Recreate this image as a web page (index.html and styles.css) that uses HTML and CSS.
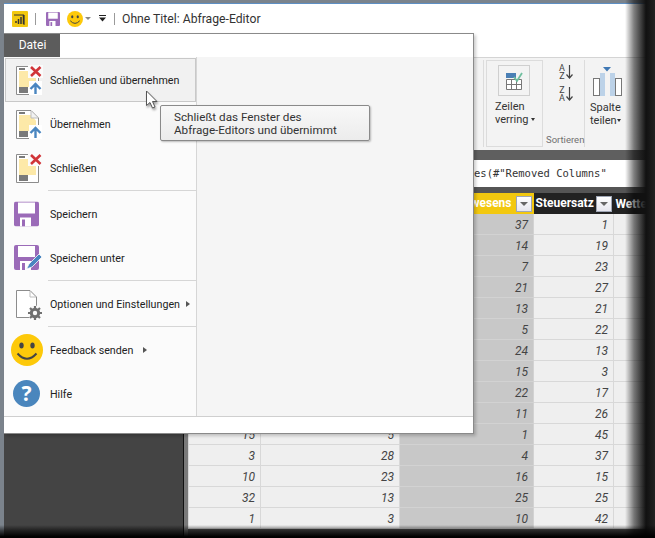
FILE: index.html
```html
<!DOCTYPE html>
<html lang="de">
<head>
    <meta charset="UTF-8">
    <title>Ohne Titel: Abfrage-Editor</title>
    <link rel="stylesheet" href="styles.css">
</head>
<body>
<svg class="defs" width="0" height="0">
    <symbol id="doc" viewBox="0 0 36 36">
        <path d="M8.5 4.5H23L30.5 12V32.5H8.5Z" fill="#fff" stroke="#8c8c8c"/>
        <path d="M11 9H22.5L28 14.500V25H11Z" fill="#fde9a8"/>
        <path d="M23 5V12H30" fill="#f2f2f2" stroke="#bdbdbd"/>
        <rect x="11" y="6" width="6" height="2" fill="#7a7a7a"/>
        <rect x="11" y="25" width="9" height="6" fill="#7a7a7a"/>
    </symbol>
    <symbol id="x" viewBox="0 0 36 36">
        <rect x="20" y="3" width="15" height="13" fill="#fbfbfb"/>
        <path d="M23 5L32.500 14M32.500 5L23 14" stroke="#d13438" stroke-width="2.600"/>
    </symbol>
    <symbol id="up" viewBox="0 0 36 36">
        <rect x="21" y="19" width="13" height="14" fill="#fff"/>
        <path d="M27.500 32V22.500M22.500 27L27.500 22L32.500 27" fill="none" stroke="#4a86c0" stroke-width="2.400"/>
    </symbol>
    <symbol id="floppy" viewBox="0 0 25 25">
        <path d="M2 0H23Q25 0 25 2V23Q25 25 23 25H2Q0 25 0 23V2Q0 0 2 0Z" fill="#9b6bb8"/>
        <rect x="4" y="1" width="17" height="11" fill="#fff"/>
        <path d="M6 16H17V25H6Z" fill="#fff"/>
        <rect x="8" y="18" width="3" height="7" fill="#9b6bb8"/>
    </symbol>
    <symbol id="smile" viewBox="0 0 32 32">
        <circle cx="16" cy="16" r="16" fill="#fdc90a"/>
        <ellipse cx="10.500" cy="11.500" rx="2.200" ry="3" fill="#444"/>
        <ellipse cx="21.500" cy="11.500" rx="2.200" ry="3" fill="#444"/>
        <path d="M6.500 19.500Q16 30 25.500 19.500" fill="none" stroke="#444" stroke-width="2"/>
    </symbol>
    <symbol id="sort-arrow" viewBox="0 0 7 14">
        <path d="M3.500 0V13M.5 9.500L3.500 13L6.500 9.500" fill="none" stroke="#444" stroke-width="1.200"/>
    </symbol>
</svg>

<div class="screen">
    <div class="window">
        <div class="titlebar">
            <svg class="qat-logo" width="16" height="16" viewBox="0 0 16 16">
                <rect width="16" height="16" rx="1" fill="#f2c80f"/>
                <path d="M2 4H12V14" fill="none" stroke="#333" stroke-width="1"/>
                <path d="M4 12V10M6.500 13V8M9 13V6M11.500 13V4" stroke="#333" stroke-width="1.500"/>
            </svg>
            <span class="qat-sep"></span>
            <svg class="qat-save" width="14" height="14"><use href="#floppy"/></svg>
            <svg class="qat-smile" width="16" height="16"><use href="#smile"/></svg>
            <span class="qat-caret"></span>
            <svg class="qat-more" width="7" height="7" viewBox="0 0 7 7">
                <path d="M0 .5H7" stroke="#222"/><path d="M0 2.500H7L3.500 6.500Z" fill="#222"/>
            </svg>
            <span class="qat-sep qat-sep-2"></span>
            <span class="title">Ohne Titel: Abfrage-Editor</span>
        </div>
        <div class="tabs"></div>

        <div class="ribbon">
            <div class="ribbon-sep"></div>
            <div class="group group-rows">
                <div class="big-icon">
                    <svg width="18" height="18" viewBox="0 0 18 18">
                        <rect x="1" y="1" width="10" height="5" fill="#4a7fb5"/>
                        <path d="M1.500 7.500H16.500V17.500H1.500ZM1.500 12.500H16.500M6.500 7.500V17.500M11.500 7.500V17.500" fill="#fff" stroke="#777"/>
                        <path d="M9 5L12 9L17 1" fill="none" stroke="#6fbf9f" stroke-width="1.800"/>
                    </svg>
                </div>
                <div class="label">Zeilen<br>verring <i class="drop"></i></div>
            </div>
            <div class="group group-sort">
                <div class="sort-icons">
                    <div class="sort-row"><span>A<br>Z</span><svg width="7" height="14"><use href="#sort-arrow"/></svg></div>
                    <div class="sort-row"><span>Z<br>A</span><svg width="7" height="14"><use href="#sort-arrow"/></svg></div>
                </div>
                <div class="group-name">Sortieren</div>
            </div>
            <div class="group group-split">
                <svg class="split-icon" width="30" height="30" viewBox="0 0 30 30">
                    <rect x="1.500" y="11.500" width="6" height="17" fill="#fff" stroke="#777"/>
                    <rect x="23.500" y="11.500" width="6" height="17" fill="#fff" stroke="#777"/>
                    <rect x="8" y="6" width="5" height="23" fill="#bcd2e8"/>
                    <rect x="18" y="6" width="5" height="23" fill="#bcd2e8"/>
                    <path d="M11 0H19L15 4.500Z" fill="#3f78b4"/>
                </svg>
                <div class="label">Spalte<br>teilen<i class="drop"></i></div>
            </div>
        </div>
        <div class="darkbar"></div>
        <div class="formula">es(#"Removed Columns"</div>

        <div class="workspace">
            <div class="queries"></div>
            <div class="gutter"></div>
            <div class="grid-wrap">
                <table class="grid">
                    <colgroup>
                        <col class="c1"><col class="c2"><col class="c3"><col class="c4"><col class="c5">
                    </colgroup>
                    <tr>
                        <th></th>
                        <th></th>
                        <th class="head-sel"><i class="filter"></i><span>wesens</span></th>
                        <th><i class="filter"></i><span>Steuersatz</span></th>
                        <th class="head-left">Wetter</th>
                    </tr>
                    <tr><td></td><td></td><td class="sel">37</td><td>1</td><td></td></tr>
                    <tr><td></td><td></td><td class="sel">14</td><td>19</td><td></td></tr>
                    <tr><td></td><td></td><td class="sel">7</td><td>23</td><td></td></tr>
                    <tr><td></td><td></td><td class="sel">21</td><td>27</td><td></td></tr>
                    <tr><td></td><td></td><td class="sel">13</td><td>21</td><td></td></tr>
                    <tr><td></td><td></td><td class="sel">5</td><td>22</td><td></td></tr>
                    <tr><td></td><td></td><td class="sel">24</td><td>13</td><td></td></tr>
                    <tr><td></td><td></td><td class="sel">15</td><td>3</td><td></td></tr>
                    <tr><td></td><td></td><td class="sel">22</td><td>17</td><td></td></tr>
                    <tr><td></td><td></td><td class="sel">11</td><td>26</td><td></td></tr>
                    <tr><td>15</td><td>5</td><td class="sel">1</td><td>45</td><td></td></tr>
                    <tr><td>3</td><td>28</td><td class="sel">4</td><td>37</td><td></td></tr>
                    <tr><td>10</td><td>23</td><td class="sel">16</td><td>15</td><td></td></tr>
                    <tr><td>32</td><td>13</td><td class="sel">25</td><td>25</td><td></td></tr>
                    <tr><td>1</td><td>3</td><td class="sel">10</td><td>42</td><td></td></tr>
                </table>
            </div>
        </div>
    </div>

    <!-- file menu, open over the window -->
    <div class="menu">
        <div class="menu-head"><div class="datei">Datei</div></div>
        <div class="menu-body">
            <div class="menu-list">
                <div class="item item-active">
                    <svg class="ico"><use href="#doc"/><use href="#x"/><use href="#up"/></svg>
                    <span>Schließen und übernehmen</span>
                </div>
                <div class="item">
                    <svg class="ico"><use href="#doc"/><use href="#up"/></svg>
                    <span>Übernehmen</span>
                </div>
                <div class="item">
                    <svg class="ico"><use href="#doc"/><use href="#x"/></svg>
                    <span>Schließen</span>
                </div>
                <div class="sep"></div>
                <div class="item item-tall">
                    <svg class="ico"><use href="#floppy" x="6" y="5.500" width="25" height="25"/></svg>
                    <span>Speichern</span>
                </div>
                <div class="item">
                    <svg class="ico">
                        <use href="#floppy" x="6" y="5" width="25" height="25"/>
                        <path d="M18.500 29L21 24L31 14L34 17L24 27Z" fill="#4a86c0" stroke="#fbfbfb" stroke-width=".8"/>
                    </svg>
                    <span>Speichern unter</span>
                </div>
                <div class="sep"></div>
                <div class="item item-tall">
                    <svg class="ico" viewBox="0 0 36 36">
                        <path d="M8.500 4.500H22L28.500 11V31.500H8.500Z" fill="#fff" stroke="#8c8c8c"/>
                        <path d="M22 5V11H28" fill="none" stroke="#bdbdbd"/>
                        <circle cx="27" cy="27" r="7.500" fill="#fbfbfb"/>
                        <circle cx="27" cy="27" r="3.700" fill="none" stroke="#707070" stroke-width="3"/>
                        <path d="M27 20V34M20 27H34M22 22L32 32M32 22L22 32" stroke="#707070" stroke-width="2.200"/>
                        <circle cx="27" cy="27" r="2.200" fill="#fbfbfb"/>
                    </svg>
                    <span>Optionen und Einstellungen</span><i class="more"></i>
                </div>
                <div class="sep"></div>
                <div class="item item-tall">
                    <svg class="ico"><use href="#smile" x="3" y="2" width="32" height="32"/></svg>
                    <span>Feedback senden</span><i class="more more-wide"></i>
                </div>
                <div class="item">
                    <svg class="ico" viewBox="0 0 36 36">
                        <circle cx="18.500" cy="17.500" r="13.500" fill="#4a86bd"/>
                        <text class="help-mark" x="18.500" y="25" text-anchor="middle">?</text>
                    </svg>
                    <span>Hilfe</span>
                </div>
            </div>
            <div class="menu-pane"></div>
        </div>
        <div class="menu-foot"></div>
    </div>

    <div class="tooltip">Schließt das Fenster des<br>Abfrage-Editors und übernimmt</div>

    <svg class="cursor" width="16" height="20" viewBox="0 0 16 20">
        <path d="M1.500 1V15.500L5 12.500L7.500 18L10 17L7.500 11.500H12Z" fill="#fff" stroke="#555"/>
    </svg>

    <div class="fade-right"></div>
    <div class="fade-bottom"></div>
</div>
</body>
</html>
```

FILE: styles.css
```css
html, body {
    margin: 0;
    padding: 0;
    background: #000;
}
.defs {
    position: absolute;
}
.screen {
    position: relative;
    width: 655px;
    height: 538px;
    overflow: hidden;
    box-sizing: border-box;
    padding: 3px 0 0 4px;
    background: #7b838c;
    font-family: Roboto, sans-serif;
    color: #222;
}
.window {
    height: 535px;
    display: flex;
    flex-direction: column;
    background: #fff;
    border-top: 1px solid #5d8fc4;
    box-sizing: border-box;
}

/* title bar */
.titlebar {
    height: 29px;
    flex: none;
    display: flex;
    align-items: center;
    padding-left: 8px;
}
.qat-sep {
    width: 1px;
    height: 12px;
    background: #9a9a9a;
    margin: 0 10px 0 7px;
}
.qat-sep-2 {
    margin: 0 7px 0 8px;
}
.qat-smile {
    margin-left: 7px;
}
.qat-caret {
    width: 0;
    height: 0;
    border: 3px solid transparent;
    border-top: 3px solid #888;
    border-bottom: 0;
    margin: 0 8px 0 2px;
}
.title {
    font-size: 12.200px;
    color: #333;
}
.tabs {
    height: 24px;
    flex: none;
}

/* ribbon */
.ribbon {
    height: 93px;
    flex: none;
    box-sizing: border-box;
    display: flex;
    padding: 2px 0 3px 479px;
    background: #f3f3f3;
    border-top: 1px solid #d4d4d4;
    font-size: 11px;
    line-height: 13px;
    color: #333;
}
.ribbon-sep {
    width: 1px;
    background: #dcdcdc;
}
.group {
    position: relative;
    box-sizing: border-box;
}
.group-rows {
    width: 57px;
    margin-left: 2px;
    border: 1px solid #dcdcdc;
    padding: 4px 0 0 8px;
}
.big-icon {
    width: 30px;
    height: 29px;
    margin-left: 3px;
    border: 1px solid #cfcfcf;
    display: flex;
    align-items: center;
    justify-content: center;
}
.label {
    margin-top: 4px;
}
.drop {
    display: inline-block;
    width: 0;
    height: 0;
    border: 2.500px solid transparent;
    border-top: 3px solid #333;
    border-bottom: 0;
    vertical-align: 2px;
}
.group-sort {
    width: 42px;
    border-right: 1px solid #dcdcdc;
}
.sort-icons {
    padding: 5px 0 0 16px;
}
.sort-row {
    display: flex;
    gap: 1px;
    height: 22px;
    font-size: 9px;
    line-height: 7.500px;
    text-align: center;
    color: #444;
}
.group-name {
    position: absolute;
    left: 3px;
    bottom: 1px;
    font-size: 9.500px;
    color: #707070;
}
.group-split {
    padding: 7px 0 0 5px;
    width: 40px;
}
.split-icon {
    display: block;
    margin-left: 2px;
}
.group-split .label {
    margin-top: 4px;
}
.darkbar {
    height: 10px;
    flex: none;
    background: #5f5f5f;
}
.formula {
    height: 27px;
    flex: none;
    padding-left: 474px;
    margin-left: -4px;
    font-family: "DejaVu Sans Mono", monospace;
    font-size: 10.500px;
    line-height: 27px;
    color: #333;
}

/* data grid */
.workspace {
    flex: 1;
    min-height: 0;
    display: flex;
}
.queries {
    width: 179px;
    flex: none;
    background: #444;
    border-right: 1px solid #111;
}
.gutter {
    width: 4px;
    flex: none;
    background: #7a7a7a;
}
.grid-wrap {
    flex: 1;
    background: #555;
    padding-top: 6px;
}
.grid {
    width: 467px;
    table-layout: fixed;
    border-collapse: collapse;
}
.c1 { width: 72px; }
.c2 { width: 139px; }
.c3 { width: 134px; }
.c4 { width: 80px; }
.grid th {
    height: 21px;
    padding: 0 2px;
    background: #222;
    color: #fff;
    font-size: 12px;
    font-weight: 700;
    white-space: nowrap;
    text-align: left;
}
.grid th.head-sel {
    background: #f2c80f;
    text-align: right;
}
.filter {
    float: right;
    box-sizing: border-box;
    width: 16px;
    height: 16px;
    margin-left: 4px;
    background: linear-gradient(#fff, #e6e6ee);
    border: 1px solid #9fa6b5;
    position: relative;
}
.filter::after {
    content: "";
    position: absolute;
    left: 3px;
    top: 5px;
    border: 4px solid transparent;
    border-top: 4px solid #666;
    border-bottom: 0;
}
.grid td {
    height: 19px;
    padding: 1px 5px 0 0;
    background: #efefef;
    border: 1px solid #d8d8d8;
    border-top: 0;
    font-size: 12px;
    font-style: italic;
    text-align: right;
    color: #444;
}
.grid td.sel {
    background: #c8c8c8;
    border-color: #d2d2d2;
}

/* file menu */
.menu {
    position: absolute;
    left: 4px;
    top: 33px;
    width: 470px;
    height: 401px;
    box-sizing: border-box;
    display: flex;
    flex-direction: column;
    background: #fff;
    border: 1px solid #8a8a8a;
    border-left: 0;
    box-shadow: 2px 2px 3px rgba(0, 0, 0, 0.2);
}
.menu-head {
    height: 23px;
    flex: none;
}
.datei {
    width: 56px;
    height: 23px;
    box-sizing: border-box;
    padding-left: 1px;
    background: #5c5c5c;
    color: #fff;
    font-size: 12px;
    line-height: 23px;
    text-align: center;
}
.menu-body {
    height: 359px;
    flex: none;
    display: flex;
    border-bottom: 1px solid #cfcfcf;
}
.menu-list {
    width: 193px;
    flex: none;
    box-sizing: border-box;
    padding: 1px 0 0 1px;
    background: #fbfbfb;
    border-right: 1px solid #d6d6d6;
    display: flex;
    flex-direction: column;
}
.menu-pane {
    flex: 1;
    background: #f5f5f5;
}
.menu-foot {
    flex: 1;
    background: #fff;
}
.item {
    height: 44px;
    flex: none;
    box-sizing: border-box;
    display: flex;
    align-items: center;
    padding-left: 2px;
    border: 1px solid transparent;
    font-size: 10.700px;
    white-space: nowrap;
    color: #222;
}
.item-tall {
    height: 45px;
}
.item-tall span {
    padding-top: 1px;
}
.item-active {
    background: #f1f1f1;
    border-color: #c8c8c8;
}
.ico {
    width: 36px;
    height: 36px;
    flex: none;
    margin-right: 6px;
}
.sep {
    height: 1px;
    flex: none;
    margin-left: 43px;
    background: #d6d6d6;
}
.more {
    width: 0;
    height: 0;
    margin-left: 6px;
    border: 3.500px solid transparent;
    border-left: 4px solid #555;
    border-right: 0;
}
.more-wide {
    margin-left: 10px;
}
.help-mark {
    font-family: "Noto Sans", sans-serif;
    font-size: 21px;
    font-weight: 700;
    fill: #fff;
}

/* tooltip and pointer */
.tooltip {
    position: absolute;
    left: 160px;
    top: 105px;
    width: 210px;
    height: 36px;
    box-sizing: border-box;
    padding: 5px 0 0 13px;
    background: linear-gradient(#f8f8f8, #ececec);
    border: 1px solid #8a8a8a;
    border-radius: 2px;
    box-shadow: 1px 1px 2px rgba(0, 0, 0, 0.25);
    font-size: 11.700px;
    line-height: 13px;
    color: #333;
}
.cursor {
    position: absolute;
    left: 145px;
    top: 90px;
    filter: drop-shadow(1px 2px 1px rgba(0, 0, 0, 0.35));
}

/* torn screenshot edge */
.fade-right {
    position: absolute;
    top: 0;
    right: 0;
    bottom: 0;
    width: 30px;
    background: linear-gradient(to right, rgba(0, 0, 0, 0), rgba(0, 0, 0, 0.5) 30%, #111 70%, #222);
}
.fade-bottom {
    position: absolute;
    left: 0;
    right: 0;
    bottom: 0;
    height: 13px;
    background: linear-gradient(rgba(0, 0, 0, 0), rgba(0, 0, 0, 0.5) 40%, #000 90%);
}
```
